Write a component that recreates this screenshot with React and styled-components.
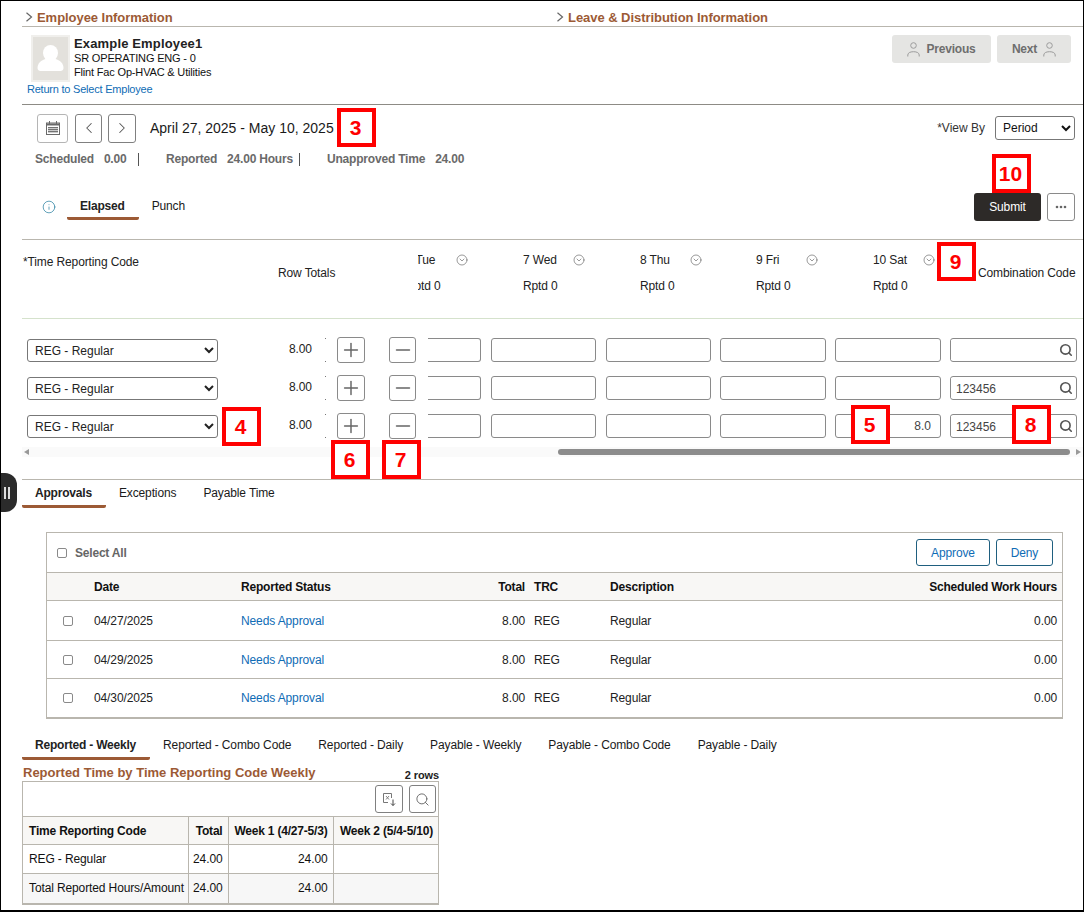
import React from 'react'
import styled, { createGlobalStyle } from 'styled-components'
import { ChevronLeft, ChevronRight, CircleChevronDown, Info, Minus, Plus, Search } from 'lucide-react'

const GlobalStyle = createGlobalStyle`
  html, body { margin: 0; padding: 0; background: #fff; }
  body { font-family: "Liberation Sans", Arial, sans-serif; font-size: 12px; letter-spacing: -0.12px; color: #111; }
  * { box-sizing: border-box; }
`

const BROWN = '#9c5a35'
const LINK = '#0f6cb5'
const RULE = '#b9b6ae'
const ROW_COLUMNS = '255px 60px 52px 39px 63px 115px 114px 115px 115px 127px'
const APPROVAL_COLUMNS = '47px 147px 1fr 70px 76px 119px 328px'

const markers = [
  { n: 3, x: 337, y: 108 },
  { n: 10, x: 992, y: 154 },
  { n: 9, x: 937, y: 242 },
  { n: 4, x: 222, y: 407 },
  { n: 5, x: 851, y: 405 },
  { n: 8, x: 1012, y: 405 },
  { n: 6, x: 331, y: 440 },
  { n: 7, x: 382, y: 440 },
]

const timeRows = [
  { combo: '', sat: '' },
  { combo: '123456', sat: '' },
  { combo: '123456', sat: '8.0' },
]

const approvals = [
  { date: '04/27/2025', height: 40 },
  { date: '04/29/2025', height: 38 },
  { date: '04/30/2025', height: 38 },
]

const days = [
  { name: '7 Wed', width: 117 },
  { name: '8 Thu', width: 116 },
  { name: '9 Fri', width: 117 },
  { name: '10 Sat', width: 105 },
]

const SectionChevron = () => (
  <svg width="8" height="10" viewBox="0 0 8 10" fill="none" stroke="#666" strokeWidth="1.200">
    <path d="M1.500 0.800L6.500 5L1.500 9.200" />
  </svg>
)

const PersonIcon = () => (
  <svg width="13" height="15" viewBox="0 0 13 15" fill="none" stroke="#9c9c9c" strokeWidth="1">
    <circle cx="6.500" cy="3.500" r="2.800" />
    <path d="M0.800 14.500v-1.500c0-2 2.200-3.300 5.700-3.300s5.700 1.300 5.700 3.300v1.500" />
  </svg>
)

const CalendarIcon = () => (
  <svg width="16" height="16" viewBox="0 0 16 16" fill="none" stroke="#6a6a6a" strokeWidth="1">
    <rect x="1.500" y="3" width="13" height="11.500" fill="#fff" />
    <path d="M1.500 4.500h13" strokeWidth="2" />
    <path d="M4.500 1v3M11.500 1v3" />
    <path d="M3 7.500h10M3 9.500h10M3 11.500h10" strokeWidth="0.900" />
    <path d="M4 7v6M6 7v6M8 7v6M10 7v6M12 7v6" strokeWidth="0.700" />
  </svg>
)

const ExportIcon = () => (
  <svg width="15" height="15" viewBox="0 0 15 15" fill="none" stroke="#777" strokeWidth="1">
    <path d="M6 10.500H1.500V1.500h8V6" />
    <path d="M4 4l3 3.500M7 4L4 7.500" strokeWidth="0.900" />
    <path d="M11 7.500V13.500M9 11.500L11 13.500l2-2" stroke="#444" />
  </svg>
)

const DotsIcon = () => (
  <svg width="12" height="4" viewBox="0 0 12 4" fill="#666">
    <circle cx="2" cy="2" r="1.300" />
    <circle cx="6" cy="2" r="1.300" />
    <circle cx="10" cy="2" r="1.300" />
  </svg>
)

const ProfilePhoto = () => (
  <PhotoFrame>
    <svg width="27" height="26" viewBox="0 0 27 26" fill="#fff">
      <ellipse cx="13.500" cy="8" rx="7.500" ry="8" />
      <path d="M0.500 23c0-5 4-8 8-9h10c4 1 8 4 8 9 0 2-1.500 3-3 3H3.500C2 26 0.500 25 0.500 23z" />
    </svg>
  </PhotoFrame>
)

const App = () => {
  return (
    <Frame>
      <GlobalStyle />
      <SectionBar>
        <SectionTitle>
          <SectionChevron />
          Employee Information
        </SectionTitle>
        <SectionTitle>
          <SectionChevron />
          Leave &amp; Distribution Information
        </SectionTitle>
      </SectionBar>

      <EmployeeBar>
        <div>
          <EmployeeCard>
            <ProfilePhoto />
            <EmployeeText>
              <EmployeeName>Example Employee1</EmployeeName>
              <span>SR OPERATING ENG - 0</span>
              <span>Flint Fac Op-HVAC &amp; Utilities</span>
            </EmployeeText>
          </EmployeeCard>
          <ReturnLink href="#">Return to Select Employee</ReturnLink>
        </div>
        <PagerGroup>
          <PagerButton $width={99}><PersonIcon />Previous</PagerButton>
          <PagerButton $width={74}>Next<PersonIcon /></PagerButton>
        </PagerGroup>
      </EmployeeBar>

      <DateBar>
        <DateControls>
          <IconButton $width={31} $height={29} $soft><CalendarIcon /></IconButton>
          <IconButton $width={27} $height={29} $left={7}><ChevronLeft size={18} color="#555" strokeWidth={1.400} /></IconButton>
          <IconButton $width={28} $height={29} $left={6}><ChevronRight size={18} color="#555" strokeWidth={1.400} /></IconButton>
          <DateRange>April 27, 2025 - May 10, 2025</DateRange>
        </DateControls>
        <ViewBy>
          *View By
          <ViewSelect defaultValue="Period">
            <option>Period</option>
          </ViewSelect>
        </ViewBy>
      </DateBar>

      <StatsRow>
        <Stat $width={104}><span>Scheduled</span><span>0.00</span></Stat>
        <Stat $width={134}><span>Reported</span><span>24.00 Hours</span></Stat>
        <Stat><span>Unapproved Time</span><span>24.00</span></Stat>
      </StatsRow>

      <ActionRow>
        <TabRow>
          <InfoSlot><Info size={14} color="#1f7a9c" strokeWidth={1.200} /></InfoSlot>
          <Tab $active $height={26}>Elapsed</Tab>
          <Tab $height={26}>Punch</Tab>
        </TabRow>
        <ActionButtons>
          <SubmitButton>Submit</SubmitButton>
          <MoreButton><DotsIcon /></MoreButton>
        </ActionButtons>
      </ActionRow>

      <GridHeader>
        <HeaderLabel $top={15}>*Time Reporting Code</HeaderLabel>
        <HeaderLabel $top={26}>Row Totals</HeaderLabel>
        <ClippedDay>
          <DayHead>
            <DayTop><DayName>6 Tue</DayName><CircleChevronDown size={12} color="#555" strokeWidth={1.200} /></DayTop>
            <span>Rptd 0</span>
          </DayHead>
        </ClippedDay>
        {days.map((day) => (
          <DayHead key={day.name} $width={day.width}>
            <DayTop><DayName>{day.name}</DayName><CircleChevronDown size={12} color="#555" strokeWidth={1.200} /></DayTop>
            <span>Rptd 0</span>
          </DayHead>
        ))}
        <HeaderLabel $top={26}>Combination Code</HeaderLabel>
      </GridHeader>

      <GridBody>
        {timeRows.map((row, i) => (
          <TimeRow key={i}>
            <TrcSelect defaultValue="REG">
              <option value="REG">REG - Regular</option>
            </TrcSelect>
            <RowTotal>8.00</RowTotal>
            <RowButton $width={28}><Plus size={22} color="#666" strokeWidth={1.600} /></RowButton>
            <RowButton $width={27}><Minus size={22} color="#666" strokeWidth={1.800} /></RowButton>
            <HoursInput $clipped $width={53} readOnly value="" />
            <HoursInput $width={105} readOnly value="" />
            <HoursInput $width={105} readOnly value="" />
            <HoursInput $width={106} readOnly value="" />
            <HoursInput $width={106} readOnly value={row.sat} />
            <ComboField>
              <ComboInput readOnly value={row.combo} />
              <Search size={14} color="#555" strokeWidth={2.800} />
            </ComboField>
          </TimeRow>
        ))}
      </GridBody>

      <ScrollTrack>
        <ScrollArrow $left />
        <ScrollThumb />
        <ScrollArrow />
      </ScrollTrack>

      <LowerTabs>
        <Tab $active>Approvals</Tab>
        <Tab>Exceptions</Tab>
        <Tab>Payable Time</Tab>
      </LowerTabs>

      <ApprovalPanel>
        <PanelToolbar>
          <SelectAll><CheckBox />Select All</SelectAll>
          <PanelButtons>
            <OutlineButton $width={74}>Approve</OutlineButton>
            <OutlineButton $width={57}>Deny</OutlineButton>
          </PanelButtons>
        </PanelToolbar>
        <ApprovalHead>
          <span />
          <span>Date</span>
          <span>Reported Status</span>
          <AlignRight>Total</AlignRight>
          <span>TRC</span>
          <span>Description</span>
          <AlignRight>Scheduled Work Hours</AlignRight>
        </ApprovalHead>
        {approvals.map((row) => (
          <ApprovalRow key={row.date} $height={row.height}>
            <CheckCell><CheckBox /></CheckCell>
            <span>{row.date}</span>
            <StatusLink href="#">Needs Approval</StatusLink>
            <AlignRight>8.00</AlignRight>
            <span>REG</span>
            <span>Regular</span>
            <AlignRight>0.00</AlignRight>
          </ApprovalRow>
        ))}
      </ApprovalPanel>

      <SummaryTabs>
        <Tab $active>Reported - Weekly</Tab>
        <Tab>Reported - Combo Code</Tab>
        <Tab>Reported - Daily</Tab>
        <Tab>Payable - Weekly</Tab>
        <Tab>Payable - Combo Code</Tab>
        <Tab>Payable - Daily</Tab>
      </SummaryTabs>

      <SummaryBlock>
        <SummaryTitleRow>
          <SummaryTitle>Reported Time by Time Reporting Code Weekly</SummaryTitle>
          <RowCount>2 rows</RowCount>
        </SummaryTitleRow>
        <SummaryBox>
          <SummaryTools>
            <IconButton $width={28} $height={28}><ExportIcon /></IconButton>
            <IconButton $width={27} $height={28}><Search size={15} color="#666" strokeWidth={1.500} /></IconButton>
          </SummaryTools>
          <SummaryTable>
            <thead>
              <tr>
                <SummaryHead>Time Reporting Code</SummaryHead>
                <SummaryHead $right>Total</SummaryHead>
                <SummaryHead $right>Week 1 (4/27-5/3)</SummaryHead>
                <SummaryHead $right>Week 2 (5/4-5/10)</SummaryHead>
              </tr>
            </thead>
            <tbody>
              <tr>
                <SummaryCell>REG - Regular</SummaryCell>
                <SummaryCell $right>24.00</SummaryCell>
                <SummaryCell $right>24.00</SummaryCell>
                <SummaryCell />
              </tr>
              <tr>
                <SummaryCell $shade>Total Reported Hours/Amount</SummaryCell>
                <SummaryCell $shade $right>24.00</SummaryCell>
                <SummaryCell $shade $right>24.00</SummaryCell>
                <SummaryCell $shade />
              </tr>
            </tbody>
          </SummaryTable>
        </SummaryBox>
      </SummaryBlock>

      <DrawerHandle><span /><span /></DrawerHandle>

      {markers.map((m) => (
        <Marker key={m.n} $x={m.x} $y={m.y}>{m.n}</Marker>
      ))}
    </Frame>
  )
}

const Frame = styled.div`
  position: relative;
  width: 1084px;
  height: 912px;
  overflow: hidden;
  border: 1px solid #000;
  border-bottom-width: 2px;
  padding-left: 21px;
`

const SectionBar = styled.div`
  display: grid;
  grid-template-columns: 531px 1fr;
  height: 26px;
  padding: 9px 0 0 3px;
  border-bottom: 1px solid ${RULE};
`

const SectionTitle = styled.div`
  display: flex;
  align-items: center;
  gap: 4px;
  height: 14px;
  font-size: 13px;
  font-weight: 700;
  letter-spacing: -0.05px;
  color: ${BROWN};
  white-space: nowrap;
`

const EmployeeBar = styled.div`
  display: flex;
  justify-content: space-between;
  height: 78px;
  padding: 8px 12px 0 5px;
  border-bottom: 1px solid #8d8b85;
`

const EmployeeCard = styled.div`
  display: flex;
  gap: 4px;
  padding-left: 4px;
`

const PhotoFrame = styled.div`
  display: flex;
  align-items: flex-start;
  justify-content: center;
  width: 39px;
  height: 47px;
  padding-top: 8px;
  background: #e3e1dc;
  border: 2px solid #f0efec;
`

const EmployeeText = styled.div`
  display: flex;
  flex-direction: column;
  padding-top: 1px;
  font-size: 11px;
  letter-spacing: -0.17px;
  line-height: 14px;
  color: #111;
`

const EmployeeName = styled.span`
  font-size: 13px;
  font-weight: 700;
  letter-spacing: 0.15px;
  line-height: 15px;
  color: #222;
`

const ReturnLink = styled.a`
  display: block;
  font-size: 11px;
  letter-spacing: -0.22px;
  line-height: 14px;
  color: ${LINK};
  text-decoration: none;
`

const PagerGroup = styled.div`
  display: flex;
  gap: 6px;
`

const PagerButton = styled.div`
  display: flex;
  align-items: center;
  justify-content: center;
  gap: 6px;
  width: ${(p) => p.$width}px;
  height: 28px;
  background: #e5e5e3;
  border-radius: 3px;
  font-weight: 700;
  letter-spacing: -0.2px;
  color: #6e6e6e;
`

const DateBar = styled.div`
  display: flex;
  justify-content: space-between;
  height: 46px;
  padding: 8px 8px 0 15px;
`

const DateControls = styled.div`
  display: flex;
  align-items: center;
  height: 30px;
`

const IconButton = styled.div`
  display: flex;
  align-items: center;
  justify-content: center;
  flex: none;
  width: ${(p) => p.$width}px;
  height: ${(p) => p.$height}px;
  margin-left: ${(p) => p.$left || 0}px;
  background: #fff;
  border: 1px solid ${(p) => (p.$soft ? '#b5b5b5' : '#808080')};
  border-radius: 3px;
`

const DateRange = styled.div`
  margin-left: 14px;
  font-size: 14px;
  letter-spacing: 0;
  color: #1a1a1a;
  white-space: nowrap;
`

const ViewBy = styled.div`
  display: flex;
  align-items: center;
  gap: 10px;
  height: 24px;
  margin-top: 3px;
  letter-spacing: 0;
  color: #333;
`

const ViewSelect = styled.select`
  width: 80px;
  height: 24px;
  padding-left: 3px;
  font: 12px "Liberation Sans", Arial, sans-serif;
  color: #111;
  background: #fff;
  border: 1px solid #777;
  border-radius: 3px;
`

const StatsRow = styled.div`
  display: flex;
  align-items: center;
  height: 16px;
  margin-left: 13px;
`

const Stat = styled.div`
  display: flex;
  gap: 10px;
  width: ${(p) => (p.$width ? `${p.$width}px` : 'auto')};
  height: 13px;
  margin-right: ${(p) => (p.$width ? 27 : 0)}px;
  border-right: ${(p) => (p.$width ? '1px solid #555' : 'none')};
  font-weight: 700;
  letter-spacing: -0.2px;
  line-height: 13px;
  color: #6a6a6a;
`

const ActionRow = styled.div`
  display: flex;
  justify-content: space-between;
  height: 73px;
  padding: 26px 8px 0 0;
  border-bottom: 1px solid ${RULE};
`

const TabRow = styled.div`
  display: flex;
  height: 28px;
  padding-top: 1px;
`

const InfoSlot = styled.div`
  display: flex;
  align-items: center;
  justify-content: center;
  width: 45px;
  height: 25px;
  padding-left: 8px;
`

const Tab = styled.div`
  height: ${(p) => p.$height || 28}px;
  padding: 0 14px 0 13px;
  font-weight: ${(p) => (p.$active ? 700 : 400)};
  letter-spacing: ${(p) => (p.$active ? -0.2 : -0.12)}px;
  line-height: ${(p) => (p.$height || 28) - 2}px;
  color: ${(p) => (p.$active ? '#222' : '#1a1a1a')};
  white-space: nowrap;
  border-bottom: ${(p) => (p.$active ? `3px solid ${BROWN}` : 'none')};
  border-radius: 0 0 2px 2px;
`

const ActionButtons = styled.div`
  display: flex;
  gap: 6px;
`

const SubmitButton = styled.div`
  display: flex;
  align-items: center;
  justify-content: center;
  width: 67px;
  height: 28px;
  background: #2d2a28;
  border-radius: 3px;
  color: #fff;
`

const MoreButton = styled.div`
  display: flex;
  align-items: center;
  justify-content: center;
  width: 28px;
  height: 28px;
  border: 1px solid #8a8a8a;
  border-radius: 3px;
`

const GridHeader = styled.div`
  display: grid;
  grid-template-columns: 255px 140px 105px 117px 116px 117px 105px 1fr;
  height: 79px;
  padding-left: 1px;
  border-bottom: 1px solid #d5e2cc;
`

const HeaderLabel = styled.div`
  padding-top: ${(p) => p.$top}px;
  line-height: 14px;
  color: #222;
  white-space: nowrap;
`

const ClippedDay = styled.div`
  overflow: hidden;
  & > div {
    margin-left: -12px;
  }
`

const DayHead = styled.div`
  display: flex;
  flex-direction: column;
  gap: 12px;
  padding-top: 13px;
  line-height: 14px;
  color: #222;
  white-space: nowrap;
`

const DayTop = styled.div`
  display: flex;
  align-items: center;
`

const DayName = styled.span`
  width: 50px;
`

const GridBody = styled.div`
  display: flex;
  flex-direction: column;
  gap: 14px;
  padding-top: 18px;
`

const TimeRow = styled.div`
  display: grid;
  grid-template-columns: ${ROW_COLUMNS};
  align-items: center;
  height: 24px;
`

const TrcSelect = styled.select`
  width: 191px;
  height: 23px;
  margin: 1px 0 0 5px;
  padding-left: 3px;
  font: 12px "Liberation Sans", Arial, sans-serif;
  color: #222;
  background: #fff;
  border: 1px solid #777;
  border-radius: 3px;
`

const RowTotal = styled.div`
  position: relative;
  height: 24px;
  padding-left: 12px;
  line-height: 22px;
  color: #222;
  &::before, &::after {
    content: '';
    position: absolute;
    left: 48px;
    width: 1px;
    height: 1px;
    background: #777;
  }
  &::before { top: 0; }
  &::after { bottom: 0; }
`

const RowButton = styled.div`
  display: flex;
  align-items: center;
  justify-content: center;
  width: ${(p) => p.$width}px;
  height: 26px;
  border: 1px solid #8a8a8a;
  border-radius: 3px;
`

const HoursInput = styled.input`
  width: ${(p) => p.$width}px;
  height: 24px;
  padding: 0 9px;
  text-align: right;
  font: 12px "Liberation Sans", Arial, sans-serif;
  color: #444;
  outline: none;
  border: 1px solid #8a8a8a;
  border-left-width: ${(p) => (p.$clipped ? 0 : 1)}px;
  border-radius: ${(p) => (p.$clipped ? '0 3px 3px 0' : '3px')};
`

const ComboField = styled.div`
  display: flex;
  align-items: center;
  width: 127px;
  height: 24px;
  padding-right: 3px;
  border: 1px solid #8a8a8a;
  border-radius: 3px;
`

const ComboInput = styled.input`
  flex: 1;
  min-width: 0;
  height: 20px;
  padding: 1px 5px 0;
  font: 12px "Liberation Sans", Arial, sans-serif;
  color: #444;
  border: none;
  outline: none;
`

const ScrollTrack = styled.div`
  display: flex;
  align-items: center;
  justify-content: space-between;
  height: 10px;
  margin-top: 10px;
  padding: 0 2px;
  background: #fafafa;
`

const ScrollArrow = styled.div`
  width: 0;
  height: 0;
  border-top: 3.500px solid transparent;
  border-bottom: 3.500px solid transparent;
  ${(p) => (p.$left ? 'border-right: 5px solid #999;' : 'border-left: 5px solid #999;')}
`

const ScrollThumb = styled.div`
  width: 512px;
  height: 6px;
  margin-left: auto;
  margin-right: 6px;
  background: #8c8c8c;
  border-radius: 3px;
`

const LowerTabs = styled.div`
  display: flex;
  height: 29px;
  margin-top: 22px;
  border-top: 1px solid ${RULE};
`

const ApprovalPanel = styled.div`
  width: 1017px;
  margin: 24px 0 0 24px;
  border: 1px solid ${RULE};
  border-bottom-width: 2px;
`

const PanelToolbar = styled.div`
  display: flex;
  align-items: center;
  justify-content: space-between;
  height: 39px;
  padding: 0 9px 0 10px;
`

const SelectAll = styled.label`
  display: flex;
  align-items: center;
  gap: 8px;
  font-weight: 700;
  letter-spacing: -0.2px;
  color: #666;
`

const CheckBox = styled.span`
  display: block;
  width: 10px;
  height: 10px;
  background: #fff;
  border: 1px solid #8a8a8a;
  border-radius: 2px;
`

const PanelButtons = styled.div`
  display: flex;
  gap: 6px;
`

const OutlineButton = styled.div`
  display: flex;
  align-items: center;
  justify-content: center;
  width: ${(p) => p.$width}px;
  height: 27px;
  border: 1px solid #1f5f7f;
  border-radius: 3px;
  color: ${LINK};
`

const ApprovalHead = styled.div`
  display: grid;
  grid-template-columns: ${APPROVAL_COLUMNS};
  align-items: center;
  height: 29px;
  padding-right: 5px;
  background: #f8f7f5;
  border-top: 1px solid ${RULE};
  border-bottom: 1px solid ${RULE};
  font-weight: 700;
  letter-spacing: -0.2px;
`

const ApprovalRow = styled.div`
  display: grid;
  grid-template-columns: ${APPROVAL_COLUMNS};
  align-items: center;
  height: ${(p) => p.$height}px;
  padding-right: 5px;
  border-bottom: 1px solid ${RULE};
  color: #222;
  &:last-child {
    border-bottom: none;
  }
`

const AlignRight = styled.span`
  padding-right: 9px;
  text-align: right;
  &:last-child {
    padding-right: 0;
  }
`

const CheckCell = styled.div`
  padding-left: 16px;
`

const StatusLink = styled.a`
  color: ${LINK};
  text-decoration: none;
`

const SummaryTabs = styled.div`
  display: flex;
  height: 28px;
  margin-top: 13px;
`

const SummaryBlock = styled.div`
  width: 417px;
  margin-top: 4px;
`

const SummaryTitleRow = styled.div`
  display: flex;
  justify-content: space-between;
  align-items: flex-end;
  height: 17px;
  padding-left: 1px;
`

const SummaryTitle = styled.div`
  padding-bottom: 1px;
  font-size: 13px;
  font-weight: 700;
  letter-spacing: 0;
  color: ${BROWN};
`

const RowCount = styled.div`
  font-size: 11px;
  font-weight: 700;
  color: #222;
`

const SummaryBox = styled.div`
  border: 1px solid ${RULE};
  border-bottom-width: 2px;
`

const SummaryTools = styled.div`
  display: flex;
  justify-content: flex-end;
  gap: 6px;
  height: 34px;
  padding: 3px 2px 0 0;
`

const SummaryTable = styled.table`
  width: 100%;
  border-collapse: collapse;
  table-layout: fixed;
`

const SummaryHead = styled.th`
  height: 28px;
  padding: 0 5px;
  font-weight: 700;
  font-size: 12px;
  letter-spacing: -0.2px;
  text-align: ${(p) => (p.$right ? 'right' : 'left')};
  white-space: nowrap;
  background: #f8f7f5;
  border: 1px solid ${RULE};
  border-left-width: 0;
  &:first-child { width: 165px; padding-left: 6px; }
  &:nth-child(2) { width: 40px; padding: 0 5px 0 2px; }
  &:nth-child(3) { width: 105px; }
  &:last-child { border-right: none; }
`

const SummaryCell = styled.td`
  height: 29px;
  padding: 0 5px;
  text-align: ${(p) => (p.$right ? 'right' : 'left')};
  white-space: nowrap;
  background: ${(p) => (p.$shade ? '#f7f7f7' : '#fff')};
  border: 1px solid ${RULE};
  border-left-width: 0;
  &:first-child { padding-left: 6px; }
  &:nth-child(2) { padding: 0 5px 0 2px; }
  &:last-child { border-right: none; }
  tr:last-child & { border-bottom: none; }
`

const DrawerHandle = styled.div`
  position: absolute;
  left: -1px;
  top: 472px;
  display: flex;
  align-items: center;
  justify-content: center;
  gap: 2px;
  width: 17px;
  height: 39px;
  padding-right: 4px;
  background: #2b2b2b;
  border-radius: 0 12px 12px 0;
  & > span {
    width: 2px;
    height: 12px;
    background: #ddd;
  }
`

const Marker = styled.div`
  position: absolute;
  left: ${(p) => p.$x - 1}px;
  top: ${(p) => p.$y - 1}px;
  display: flex;
  align-items: center;
  justify-content: center;
  width: 39px;
  height: 39px;
  padding-right: 2px;
  background: #fff;
  border: 4px solid #f00;
  font-size: 21px;
  font-weight: 700;
  letter-spacing: 0;
  color: #f00;
`

export default App
